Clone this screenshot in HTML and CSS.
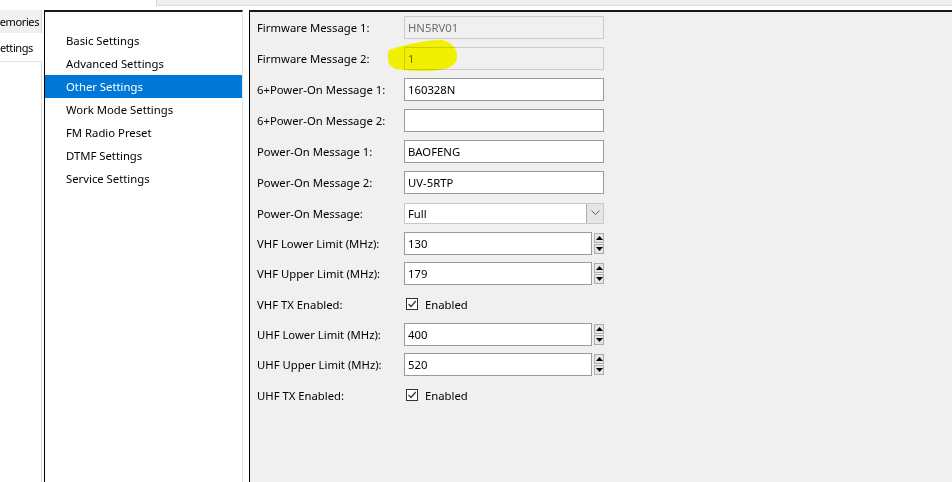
FILE: index.html
```html
<!DOCTYPE html>
<html>
<head>
<meta charset="utf-8">
<link rel="stylesheet" href="styles.css">
</head>
<body>
<div class="top">
  <div class="top-left"></div>
  <div class="top-bar"></div>
</div>
<div class="main">
  <div class="tabs">
    <div class="tab tab-off"><span>emories</span></div>
    <div class="tab tab-on"><span>ettings</span></div>
    <div class="tab-panel"></div>
  </div>
  <div class="tree">
    <div class="item">Basic Settings</div>
    <div class="item">Advanced Settings</div>
    <div class="item selected">Other Settings</div>
    <div class="item">Work Mode Settings</div>
    <div class="item">FM Radio Preset</div>
    <div class="item">DTMF Settings</div>
    <div class="item">Service Settings</div>
  </div>
  <div class="split"></div>
  <div class="panel">
    <div class="row r31"><div class="lbl">Firmware Message 1:</div><div class="tb disabled">HN5RV01</div></div>
    <div class="row r31"><div class="lbl">Firmware Message 2:</div><div class="tb disabled">1</div></div>
    <div class="row r31"><div class="lbl">6+Power-On Message 1:</div><div class="tb">160328N</div></div>
    <div class="row r31"><div class="lbl">6+Power-On Message 2:</div><div class="tb"></div></div>
    <div class="row r31"><div class="lbl">Power-On Message 1:</div><div class="tb">BAOFENG</div></div>
    <div class="row r31"><div class="lbl">Power-On Message 2:</div><div class="tb">UV-5RTP</div></div>
    <div class="row r30"><div class="lbl">Power-On Message:</div>
      <div class="combo"><span class="combo-text">Full</span><span class="combo-btn"><svg width="9" height="6" viewBox="0 0 9 6"><path d="M0.5 0.5 L4.5 4.5 L8.5 0.5" fill="none" stroke="#606060" stroke-width="1"/></svg></span></div>
    </div>
    <div class="row r30"><div class="lbl">VHF Lower Limit (MHz):</div>
      <div class="spin"><div class="tb num">130</div><div class="spin-btns"><span class="sb"><svg width="7" height="4" viewBox="0 0 7 4"><path d="M0 4 L3.5 0 L7 4 Z" fill="#000"/></svg></span><span class="sb"><svg width="7" height="4" viewBox="0 0 7 4"><path d="M0 0 L3.5 4 L7 0 Z" fill="#000"/></svg></span></div></div>
    </div>
    <div class="row r31"><div class="lbl">VHF Upper Limit (MHz):</div>
      <div class="spin"><div class="tb num">179</div><div class="spin-btns"><span class="sb"><svg width="7" height="4" viewBox="0 0 7 4"><path d="M0 4 L3.5 0 L7 4 Z" fill="#000"/></svg></span><span class="sb"><svg width="7" height="4" viewBox="0 0 7 4"><path d="M0 0 L3.5 4 L7 0 Z" fill="#000"/></svg></span></div></div>
    </div>
    <div class="row r30"><div class="lbl">VHF TX Enabled:</div>
      <div class="chk"><span class="box"><svg width="10" height="10" viewBox="0 0 10 10"><path d="M1.5 5 L4 7.5 L8.8 2" fill="none" stroke="#333" stroke-width="1.2"/></svg></span>Enabled</div>
    </div>
    <div class="row r30"><div class="lbl">UHF Lower Limit (MHz):</div>
      <div class="spin"><div class="tb num">400</div><div class="spin-btns"><span class="sb"><svg width="7" height="4" viewBox="0 0 7 4"><path d="M0 4 L3.5 0 L7 4 Z" fill="#000"/></svg></span><span class="sb"><svg width="7" height="4" viewBox="0 0 7 4"><path d="M0 0 L3.5 4 L7 0 Z" fill="#000"/></svg></span></div></div>
    </div>
    <div class="row r31"><div class="lbl">UHF Upper Limit (MHz):</div>
      <div class="spin"><div class="tb num">520</div><div class="spin-btns"><span class="sb"><svg width="7" height="4" viewBox="0 0 7 4"><path d="M0 4 L3.5 0 L7 4 Z" fill="#000"/></svg></span><span class="sb"><svg width="7" height="4" viewBox="0 0 7 4"><path d="M0 0 L3.5 4 L7 0 Z" fill="#000"/></svg></span></div></div>
    </div>
    <div class="row r30"><div class="lbl">UHF TX Enabled:</div>
      <div class="chk"><span class="box"><svg width="10" height="10" viewBox="0 0 10 10"><path d="M1.5 5 L4 7.5 L8.8 2" fill="none" stroke="#333" stroke-width="1.2"/></svg></span>Enabled</div>
    </div>
    <svg class="highlight" width="80" height="40" viewBox="385 36 80 40"><path d="M389 50 C402 45 426 40 442 40 C451 42 457 48 457 55 C458 63 452 68 440 70 C425 72 408 71 396 69 C390 67 388 63 388 58 C388 55 388 52 389 50 Z" fill="#ffff00"/></svg>
  </div>
</div>
</body>
</html>
```
FILE: styles.css
```css
* { box-sizing: border-box; }
html, body { margin: 0; padding: 0; }
body {
  width: 952px;
  height: 482px;
  overflow: hidden;
  background: #ffffff;
  font-family: "Noto Sans", "Open Sans", sans-serif;
  font-size: 11.3px;
  color: #000;
}
.top { display: flex; height: 10px; }
.top-left { width: 156px; }
.top-bar {
  flex: 1;
  height: 6px;
  background: #f0f0f0;
  border-left: 1px solid #d9d9d9;
  border-bottom: 1px solid #d9d9d9;
}
.main { display: flex; height: 472px; }
.tabs { width: 42px; display: flex; flex-direction: column; }
.tab {
  display: flex;
  justify-content: flex-end;
  align-items: center;
  white-space: nowrap;
  font-size: 11px;
  letter-spacing: -0.4px;
}
.tab-off {
  height: 23px;
  background: #f0f0f0;
  border-right: 1px solid #d9d9d9;
  padding-right: 2px;
}
.tab-on {
  height: 28px;
  background: #fff;
  padding-right: 9px;
}
.tab-panel {
  flex: 1;
  border-top: 1px solid #e3e3e3;
  border-right: 1px solid #d9d9d9;
}
.tree {
  margin-left: 2px;
  width: 199px;
  background: #fff;
  border-top: 2px solid #1a1a1a;
  border-left: 1px solid #000;
  border-right: 1px solid #e3e3e3;
  padding-top: 17px;
}
.item {
  height: 23px;
  line-height: 23px;
  padding-left: 21px;
  white-space: nowrap;
}
.item.selected { background: #0078d7; color: #fff; }
.split { width: 6px; }
.panel {
  position: relative;
  flex: 1;
  background: #f0f0f0;
  border-top: 2px solid #1a1a1a;
  border-left: 1px solid #000;
  padding-left: 7px;
}
.row {
  display: grid;
  grid-template-columns: 147px 200px;
  align-items: center;
}
.r31 { height: 31px; }
.r30 { height: 30px; }
.lbl { white-space: nowrap; }
.tb {
  height: 23px;
  background: #fff;
  border: 1px solid #9a9a9a;
  padding-left: 3px;
  line-height: 21px;
  white-space: nowrap;
}
.tb.disabled {
  background: #f0f0f0;
  border-color: #cccccc;
  color: #6d6d6d;
}
.combo {
  height: 21px;
  background: #fff;
  border: 1px solid #c8c8c8;
  display: flex;
  align-items: stretch;
}
.combo-text { flex: 1; padding-left: 3px; line-height: 19px; }
.combo-btn {
  width: 17px;
  background: #e5e5e5;
  border-left: 1px solid #adadad;
  display: flex;
  align-items: center;
  justify-content: center;
}
.spin { display: flex; align-items: center; gap: 2px; }
.spin .tb { width: 188px; }
.spin-btns { width: 10px; display: flex; flex-direction: column; gap: 1px; }
.sb {
  height: 10px;
  background: #e6e6e6;
  border: 1px solid #adadad;
  display: flex;
  align-items: center;
  justify-content: center;
}
.chk { display: flex; align-items: center; padding-left: 2px; }
.box {
  width: 12px;
  height: 12px;
  border: 1px solid #333;
  background: #fff;
  margin-right: 7px;
  display: flex;
  align-items: center;
  justify-content: center;
}
.highlight {
  position: absolute;
  left: 135px;
  top: 24px;
  mix-blend-mode: multiply;
}
```
